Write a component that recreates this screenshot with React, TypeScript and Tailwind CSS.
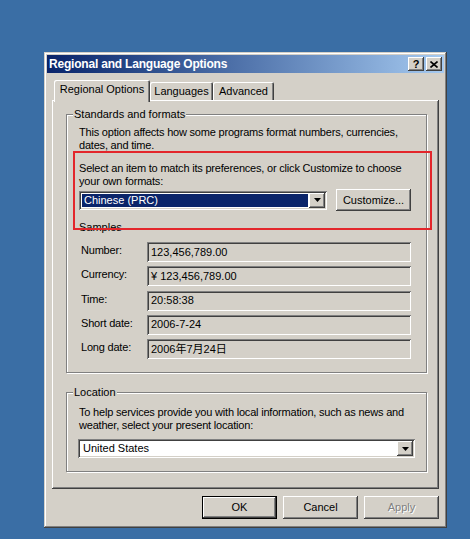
import React from 'react';

// classic Win2000 bevels
const raised = 'shadow-[inset_-1px_-1px_#404040,inset_1px_1px_#ffffff,inset_-2px_-2px_#808080,inset_2px_2px_#d4d0c8]';
const sunken = 'shadow-[inset_1px_1px_#808080,inset_-1px_-1px_#ffffff,inset_2px_2px_#404040,inset_-2px_-2px_#d4d0c8]';
const frame = 'shadow-[inset_-1px_-1px_#404040,inset_1px_1px_#d4d0c8,inset_-2px_-2px_#808080,inset_2px_2px_#ffffff]';
const etched = 'border border-[#808080] shadow-[inset_1px_1px_#ffffff,1px_1px_#ffffff]';

function Arrow() {
  return (
    <svg width="7" height="4" viewBox="0 0 7 4">
      <polygon points="0,0 7,0 3.5,4" fill="#000" />
    </svg>
  );
}

function ComboArrow() {
  return (
    <div className={`w-[16px] h-[15px] bg-[#d4d0c8] flex items-center justify-center ${raised}`}>
      <Arrow />
    </div>
  );
}

function Legend({ children }: { children: React.ReactNode }) {
  return <div className="-mt-[7px] ml-[6px] px-[1px] bg-[#d4d0c8] w-fit leading-[13px]">{children}</div>;
}

function Button({ label, isDefault, disabled, className = '' }: { label: string; isDefault?: boolean; disabled?: boolean; className?: string }) {
  const text = disabled ? 'text-[#808080] [text-shadow:1px_1px_#ffffff]' : 'text-black';
  if (isDefault) {
    return (
      <div className={`border border-black bg-[#d4d0c8] ${className}`}>
        <div className={`w-full h-full flex items-center justify-center ${raised} ${text}`}>{label}</div>
      </div>
    );
  }
  return <div className={`bg-[#d4d0c8] flex items-center justify-center ${raised} ${text} ${className}`}>{label}</div>;
}

const samples: [string, string][] = [
  ['Number:', '123,456,789.00'],
  ['Currency:', '¥ 123,456,789.00'],
  ['Time:', '20:58:38'],
  ['Short date:', '2006-7-24'],
  ['Long date:', '2006年7月24日'],
];

export default function App() {
  return (
    <div className="w-[470px] h-[539px] bg-[#3a6ea5] pt-[52px] pl-[44px] text-[11px] text-black font-['Liberation_Sans','Noto_Sans_CJK_SC',sans-serif] overflow-hidden">
      <div className={`w-[403px] h-[476px] bg-[#d4d0c8] p-[3px] ${frame}`}>
        {/* title bar */}
        <div className="h-[18px] flex items-center bg-gradient-to-r from-[#0a246a] to-[#a6caf0]">
          <span className="pl-[2px] text-white font-bold text-[12px] leading-[14px] tracking-[-0.2px]">Regional and Language Options</span>
          <div className="ml-auto flex gap-[2px] pr-[2px]">
            <div className={`w-[16px] h-[14px] bg-[#d4d0c8] flex items-center justify-center font-bold text-[11px] leading-none ${raised}`}>?</div>
            <div className={`w-[16px] h-[14px] bg-[#d4d0c8] flex items-center justify-center ${raised}`}>
              <svg width="8" height="7" viewBox="0 0 8 7">
                <path d="M0.5 0.5 L7.5 6.5 M7.5 0.5 L0.5 6.5" stroke="#000" strokeWidth="1.6" />
              </svg>
            </div>
          </div>
        </div>

        <div className="pl-[5px] pr-[5px]">
          {/* tabs */}
          <div className="mt-[7px] h-[20px] flex items-end pl-[2px]">
            <div className="relative z-10 -mb-[2px] h-[22px] w-[96px] bg-[#d4d0c8] rounded-t-[2px] pt-[3px] text-center leading-[13px] shadow-[inset_1px_1px_#ffffff,inset_-1px_0_#404040,inset_-2px_0_#808080]">
              Regional Options
            </div>
            <div className="h-[18px] w-[63px] rounded-t-[2px] pt-[3px] text-center leading-[13px] shadow-[inset_1px_1px_#ffffff,inset_-1px_0_#404040,inset_-2px_0_#808080]">
              Languages
            </div>
            <div className="h-[18px] w-[61px] rounded-t-[2px] pt-[3px] text-center leading-[13px] shadow-[inset_1px_1px_#ffffff,inset_-1px_0_#404040,inset_-2px_0_#808080]">
              Advanced
            </div>
          </div>

          {/* tab panel */}
          <div className={`w-[387px] h-[389px] pt-[14px] pl-[14px] ${raised}`}>
            {/* Standards and formats */}
            <div className={`relative w-[361px] h-[259px] ${etched}`}>
              <Legend>Standards and formats</Legend>
              <div className="pl-[12px] leading-[13px]">
                <p className="mt-[5px] w-[340px] tracking-[-0.2px]">This option affects how some programs format numbers, currencies, dates, and time.</p>
                <p className="mt-[10px] w-[340px] tracking-[-0.2px]">Select an item to match its preferences, or click Customize to choose your own formats:</p>
                <div className="mt-[1px] h-[22px] flex items-center">
                  <div className={`w-[248px] h-[19px] bg-white p-[2px] flex ${sunken}`}>
                    <div className="flex-1 m-[1px] bg-[#0a246a] text-white pl-[2px] leading-[13px]">Chinese (PRC)</div>
                    <ComboArrow />
                  </div>
                  <Button label="Customize..." className="ml-[9px] w-[75px] h-[22px]" />
                </div>
                <p className="mt-[10px]">Samples</p>
                <div className="mt-[8px] flex flex-col gap-[4.25px]">
                  {samples.map(([label, value]) => (
                    <div key={label} className="flex items-center">
                      <div className="w-[68px] pl-[2px] -mt-[3px] tracking-[-0.2px]">{label}</div>
                      <div className={`w-[264px] h-[20px] bg-[#d4d0c8] pl-[4px] flex items-center ${sunken}`}>{value}</div>
                    </div>
                  ))}
                </div>
              </div>
              {/* red highlight annotation */}
              <div className="absolute left-[6px] top-[36px] w-[359px] h-[79px] border-2 border-[#e3262b] pointer-events-none" />
            </div>

            {/* Location */}
            <div className={`mt-[19px] w-[361px] h-[80px] ${etched}`}>
              <Legend>Location</Legend>
              <div className="pl-[12px] leading-[13px]">
                <p className="mt-[7px] w-[340px] tracking-[-0.2px]">To help services provide you with local information, such as news and weather, select your present location:</p>
                <div className={`mt-[7px] -ml-[1px] w-[337px] h-[19px] bg-white p-[2px] flex ${sunken}`}>
                  <div className="flex-1 pl-[3px] leading-[15px]">United States</div>
                  <ComboArrow />
                </div>
              </div>
            </div>
          </div>

          {/* buttons */}
          <div className="mt-[7px] flex justify-end gap-[6px]">
            <Button label="OK" isDefault className="w-[75px] h-[23px]" />
            <Button label="Cancel" className="w-[75px] h-[23px]" />
            <Button label="Apply" disabled className="w-[75px] h-[23px]" />
          </div>
        </div>
      </div>
    </div>
  );
}
